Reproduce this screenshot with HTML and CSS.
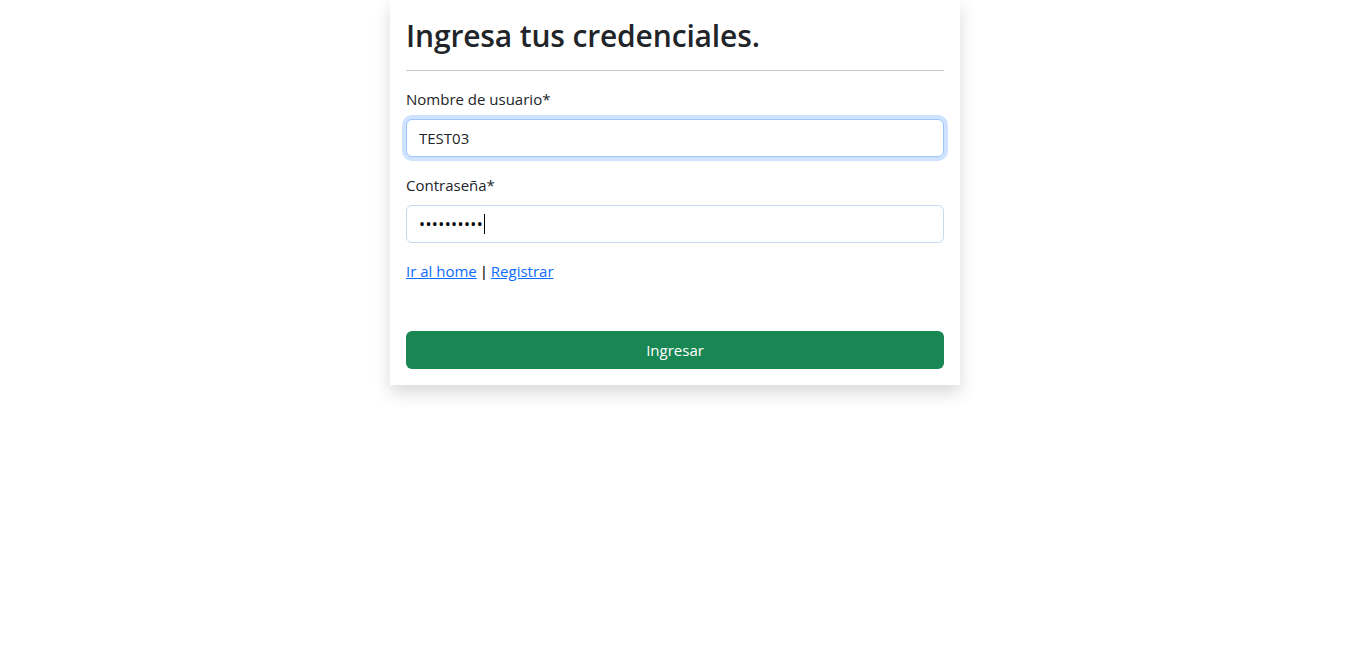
FILE: index.html
```html
<!DOCTYPE html>
<html lang="es">
<head>
<meta charset="utf-8">
<title>Ingresa tus credenciales</title>
<link rel="stylesheet" href="styles.css">
</head>
<body>
<main class="page">
  <form class="card" onsubmit="return false">
    <h2 class="title">Ingresa tus credenciales.</h2>
    <hr class="divider">
    <div class="field">
      <label class="label" for="user">Nombre de usuario*</label>
      <input class="input input-focus" id="user" type="text" value="TEST03">
    </div>
    <div class="field">
      <label class="label" for="pass">Contraseña*</label>
      <div class="input-wrap">
        <input class="input input-pass" id="pass" type="password" value="abcdefghij">
        <span class="caret"></span>
      </div>
    </div>
    <p class="links"><a href="#">Ir al home</a> <span class="sep">|</span> <a href="#">Registrar</a></p>
    <button class="btn" type="submit">Ingresar</button>
  </form>
</main>
</body>
</html>
```

FILE: styles.css
```css
* { box-sizing: border-box; }
html, body { margin: 0; padding: 0; background: #fff; }
body {
  min-height: 100vh;
  font-family: "Open Sans", "Noto Sans", "Liberation Sans", sans-serif;
  font-size: 15px;
  line-height: 24px;
  color: #212529;
}
.page {
  display: flex;
  justify-content: center;
  align-items: flex-start;
}
.card {
  width: 570px;
  padding: 16px;
  background: #fff;
  box-shadow: 0 8px 16px rgba(0, 0, 0, 0.15);
  display: flex;
  flex-direction: column;
}
.title {
  margin: 0;
  padding-top: 2px;
  font-size: 30px;
  font-weight: 600;
  line-height: 36.4px;
  letter-spacing: -0.15px;
}
.divider {
  margin: 16px 0;
  border: 0;
  border-top: 1px solid #212529;
  opacity: 0.25;
}
.field {
  display: flex;
  flex-direction: column;
  margin-bottom: 16px;
}
.label {
  margin-bottom: 8px;
}
.input-wrap { position: relative; }
.input {
  display: block;
  width: 100%;
  height: 38px;
  padding: 6px 12px;
  font: inherit;
  color: #212529;
  background: #fff;
  border: 1px solid #c9d7ef;
  border-radius: 6px;
  outline: none;
}
.input-focus {
  border-color: #9ec5fe;
  box-shadow: 0 0 0 4px rgba(13, 110, 253, 0.2);
}
.input-pass {
  font-size: 16px;
  letter-spacing: 0.4px;
  color: #000;
}
.caret {
  position: absolute;
  left: 78px;
  top: 9px;
  width: 1px;
  height: 20px;
  background: #000;
}
.links {
  margin: 0 0 48px;
  word-spacing: -1px;
}
.sep { color: #212529; font-weight: 600; }
.links a { color: #0d6efd; text-decoration: underline; word-spacing: 0; }
.btn {
  height: 38px;
  width: 100%;
  border: 0;
  border-radius: 6px;
  background: #198754;
  color: #fff;
  font: inherit;
  cursor: pointer;
}
```
